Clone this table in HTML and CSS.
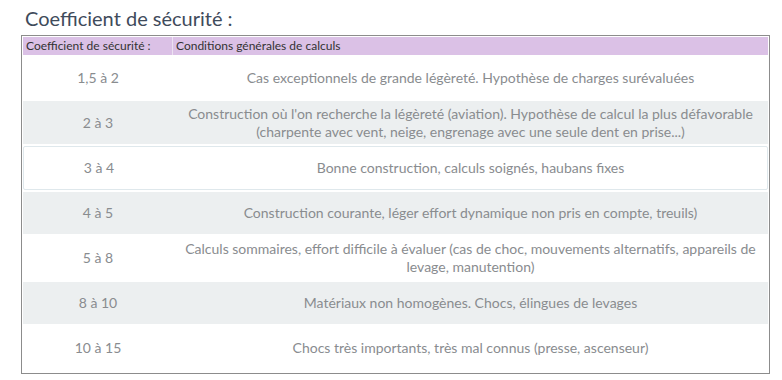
FILE: index.html
```html
<!DOCTYPE html>
<html lang="fr">
<head>
<meta charset="utf-8">
<title>Coefficient de sécurité</title>
<link rel="stylesheet" href="styles.css">
</head>
<body>
<h1 class="title">Coefficient de sécurité :</h1>
<div class="table">
  <div class="row head">
    <div class="c1">Coefficient de sécurité :</div>
    <div class="c2">Conditions générales de calculs</div>
  </div>
  <div class="row r1">
    <div class="c1">1,5 à 2</div>
    <div class="c2">Cas exceptionnels de grande légèreté. Hypothèse de charges surévaluées</div>
  </div>
  <div class="row r2 alt">
    <div class="c1">2 à 3</div>
    <div class="c2">Construction où l'on recherche la légèreté (aviation). Hypothèse de calcul la plus défavorable<br>(charpente avec vent, neige, engrenage avec une seule dent en prise...)</div>
  </div>
  <div class="row r3 sel">
    <div class="c1">3 à 4</div>
    <div class="c2">Bonne construction, calculs soignés, haubans fixes</div>
  </div>
  <div class="row r4 alt">
    <div class="c1">4 à 5</div>
    <div class="c2">Construction courante, léger effort dynamique non pris en compte, treuils)</div>
  </div>
  <div class="row r5">
    <div class="c1">5 à 8</div>
    <div class="c2">Calculs sommaires, effort difficile à évaluer (cas de choc, mouvements alternatifs, appareils de<br>levage, manutention)</div>
  </div>
  <div class="row r6 alt">
    <div class="c1">8 à 10</div>
    <div class="c2">Matériaux non homogènes. Chocs, élingues de levages</div>
  </div>
  <div class="row r7">
    <div class="c1">10 à 15</div>
    <div class="c2">Chocs très importants, très mal connus (presse, ascenseur)</div>
  </div>
</div>
</body>
</html>
```
FILE: styles.css
```css
html, body {
  margin: 0;
  padding: 0;
  background: #ffffff;
}
body {
  font-family: Lato, "Open Sans", sans-serif;
}
.title {
  margin: 0;
  padding: 6px 0 0 25px;
  height: 29px;
  box-sizing: border-box;
  font-size: 20px;
  font-weight: 400;
  line-height: 24px;
  color: #3f4b5b;
}
.table {
  margin: 6px 0 0 21px;
  width: 749px;
  box-sizing: border-box;
  border: 1px solid #8c8c8c;
  padding: 1px;
}
.row {
  display: flex;
  align-items: center;
  box-sizing: border-box;
  font-size: 14px;
  line-height: 18px;
  color: #898c8f;
}
.c1 {
  width: 150px;
  flex: none;
  text-align: center;
  box-sizing: border-box;
}
.c2 {
  flex: 1;
  text-align: center;
  padding: 0 6px;
}
.head {
  height: 18px;
  background: #dbc1e6;
  font-size: 12px;
  line-height: 18px;
  color: #333333;
  align-items: stretch;
}
.head .c1 {
  text-align: left;
  padding: 0 0 0 3px;
  border-right: 1px solid #ece2f1;
}
.head .c2 {
  text-align: left;
  padding: 0 0 0 3px;
}
.alt {
  background: #eceff0;
}
.r1 { height: 46px; }
.r2 { height: 43px; }
.r3 {
  height: 44px;
  margin: 2px 0 2px;
  border: 1px solid #dfe8ec;
  border-radius: 2px;
}
.r4 { height: 42px; }
.r5 { height: 48px; }
.r6 { height: 42px; }
.r7 { height: 48px; }
```
